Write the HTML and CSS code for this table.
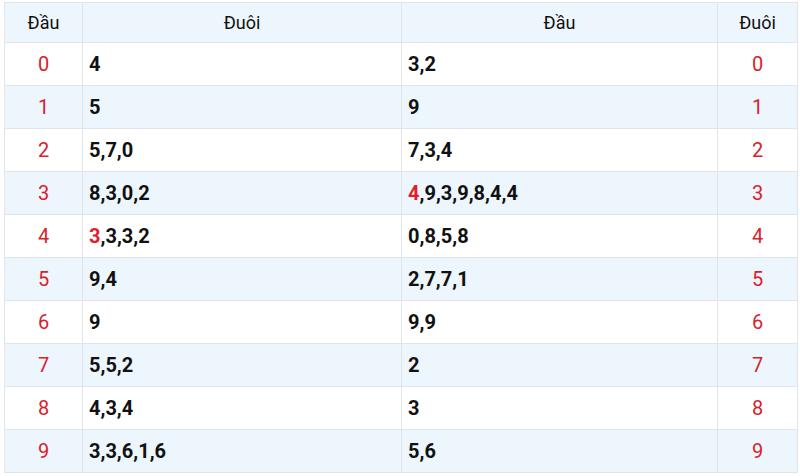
FILE: index.html
```html
<!DOCTYPE html>
<html>
<head>
<meta charset="utf-8">
<link rel="stylesheet" href="styles.css">
</head>
<body>
<div class="wrap">
<table class="loto">
  <colgroup>
    <col class="w1"><col class="w2"><col class="w3"><col class="w4">
  </colgroup>
  <thead>
    <tr><th>Đầu</th><th>Đuôi</th><th>Đầu</th><th>Đuôi</th></tr>
  </thead>
  <tbody>
    <tr><td class="num">0</td><td class="val">4</td><td class="val">3,2</td><td class="num">0</td></tr>
    <tr><td class="num">1</td><td class="val">5</td><td class="val">9</td><td class="num">1</td></tr>
    <tr><td class="num">2</td><td class="val">5,7,0</td><td class="val">7,3,4</td><td class="num">2</td></tr>
    <tr><td class="num">3</td><td class="val">8,3,0,2</td><td class="val"><span class="hot">4</span>,9,3,9,8,4,4</td><td class="num">3</td></tr>
    <tr><td class="num">4</td><td class="val"><span class="hot">3</span>,3,3,2</td><td class="val">0,8,5,8</td><td class="num">4</td></tr>
    <tr><td class="num">5</td><td class="val">9,4</td><td class="val">2,7,7,1</td><td class="num">5</td></tr>
    <tr><td class="num">6</td><td class="val">9</td><td class="val">9,9</td><td class="num">6</td></tr>
    <tr><td class="num">7</td><td class="val">5,5,2</td><td class="val">2</td><td class="num">7</td></tr>
    <tr><td class="num">8</td><td class="val">4,3,4</td><td class="val">3</td><td class="num">8</td></tr>
    <tr><td class="num">9</td><td class="val">3,3,6,1,6</td><td class="val">5,6</td><td class="num">9</td></tr>
  </tbody>
</table>
</div>
</body>
</html>
```
FILE: styles.css
```css
html, body { margin: 0; padding: 0; background: #fff; }
body { font-family: Roboto, "Liberation Sans", sans-serif; }
.wrap { padding: 2px 3px 0 4px; }
.loto {
  width: 793px;
  border-collapse: collapse;
  table-layout: fixed;
}
.w1 { width: 78px; }
.w2 { width: 319px; }
.w3 { width: 316px; }
.w4 { width: 80px; }
.loto th, .loto td {
  border: 1px solid #dfe5eb;
  padding: 0;
}
.loto th {
  height: 39px;
  background: #eef6fd;
  font-weight: 400;
  font-size: 18px;
  color: #111;
  text-align: center;
}
.loto td { height: 42px; }
.loto tbody tr:nth-child(even) td { background: #eef6fd; }
.num {
  text-align: center;
  color: #d8222b;
  font-size: 20px;
}
.val {
  padding-left: 6px !important;
  font-weight: 700;
  font-size: 20px;
  color: #111;
}
.hot { color: #e0202a; }
```
